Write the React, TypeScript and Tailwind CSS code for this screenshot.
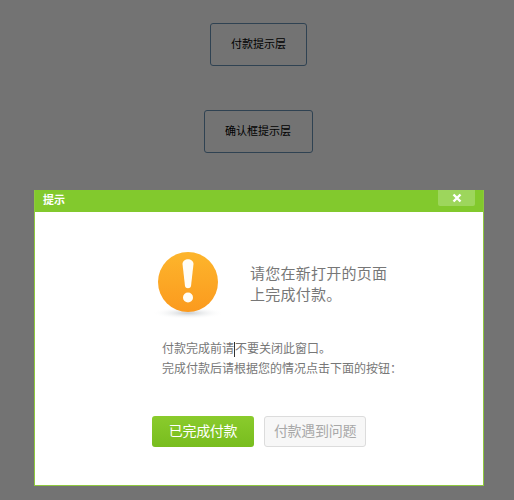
const cjk = 'font-["Liberation_Sans","Noto_Sans_CJK_SC",sans-serif]';

function WarningIcon() {
  return (
    <svg width="72" height="76" viewBox="0 0 72 76" className="shrink-0">
      <defs>
        <linearGradient id="orange" x1="0" y1="0" x2="0" y2="1">
          <stop offset="0" stopColor="#fdb52c" />
          <stop offset="1" stopColor="#fb9a1e" />
        </linearGradient>
        <radialGradient id="shade">
          <stop offset="0" stopColor="#b9bfc4" stopOpacity="0.8" />
          <stop offset="1" stopColor="#ffffff" stopOpacity="0" />
        </radialGradient>
      </defs>
      <ellipse cx="36" cy="63" rx="36" ry="6" fill="url(#shade)" />
      <circle cx="36" cy="32" r="30" fill="url(#orange)" />
      <path d="M30.500 14c0-6.500 11-6.500 11 0l-2.500 22c-.4 3-5.600 3-6 0z" fill="#fffdf6" />
      <circle cx="36" cy="47.500" r="5" fill="#fffdf6" />
    </svg>
  );
}

export default function App() {
  return (
    <div className={`flex h-[500px] w-[514px] flex-col items-center overflow-hidden bg-[#737373] pl-[4px] ${cjk}`}>
      {/* buttons behind the mask */}
      <div className="mt-[23px] ml-[-1px] flex h-[43px] w-[97px] items-center justify-center rounded-[3px] border border-[#2f4252] text-[11px] text-black">
        付款提示层
      </div>
      <div className="ml-[-2px] mt-[44px] flex h-[43px] w-[109px] items-center justify-center rounded-[3px] border border-[#2f4252] text-[11px] text-black">
        确认框提示层
      </div>

      {/* dialog */}
      <div className="mt-[37px] flex h-[296px] w-[450px] flex-col border border-t-0 border-[#8fc93f] bg-white">
        <div className="flex h-[22px] shrink-0 items-start justify-between bg-[#82c92d] pl-[8px] pr-[8px]">
          <span className="mt-[4px] text-[11px] font-bold leading-[13px] text-white">提示</span>
          <button className="flex h-[16px] w-[37px] items-center justify-center rounded-b-[2px] bg-[#9dd65c]">
            <svg width="10" height="10" viewBox="0 0 10 10">
              <path d="M1.500 1.500l7 7M8.500 1.500l-7 7" stroke="#fff" strokeWidth="2.400" />
            </svg>
          </button>
        </div>

        <div className="flex flex-col pl-[127px]">
          <div className="ml-[-10px] mt-[38px] flex items-start">
            <WarningIcon />
            <div className="ml-[26px] mt-[13px] text-[15px] leading-[21px] tracking-[0.25px] text-[#777]">
              <p>请您在新打开的页面</p>
              <p>上完成付款。</p>
            </div>
          </div>

          <div className="mt-[13px] text-[12px] leading-[20px] text-[#777]">
            <p className="flex items-center">
              付款完成前请
              <span className="h-[15px] w-px bg-[#333]" />
              不要关闭此窗口。
            </p>
            <p>完成付款后请根据您的情况点击下面的按钮：</p>
          </div>

          <div className="ml-[-10px] mt-[37px] flex gap-[10px]">
            <button className="flex h-[31px] w-[102px] items-center justify-center rounded-[3px] bg-gradient-to-b from-[#8acb2c] to-[#78bd1e] text-[14px] tracking-[-0.3px] text-white">
              已完成付款
            </button>
            <button className="flex h-[31px] w-[102px] items-center justify-center rounded-[3px] border border-[#dcdcdc] bg-[#f7f7f7] text-[14px] tracking-[-0.3px] text-[#a8a8a8]">
              付款遇到问题
            </button>
          </div>
        </div>
      </div>
    </div>
  );
}
